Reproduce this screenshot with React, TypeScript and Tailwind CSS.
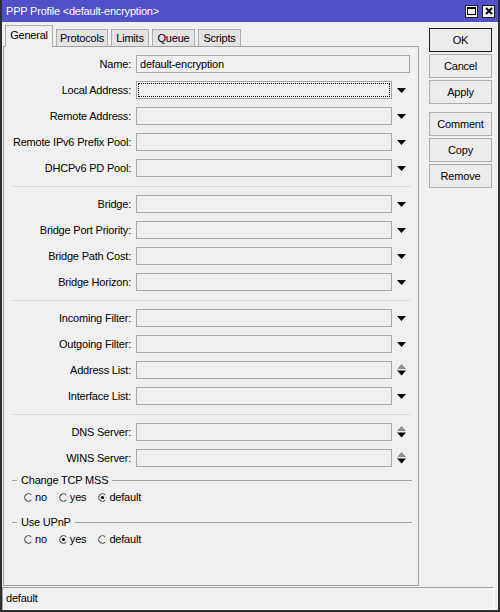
import React from "react";

type FieldKind = "drop" | "spin" | "none";

type Row = {
  label: string;
  value?: string;
  kind: FieldKind;
  focused?: boolean;
  wide?: boolean;
};

const groups: Row[][] = [
  [
    { label: "Name:", value: "default-encryption", kind: "none", wide: true },
    { label: "Local Address:", kind: "drop", focused: true },
    { label: "Remote Address:", kind: "drop" },
    { label: "Remote IPv6 Prefix Pool:", kind: "drop" },
    { label: "DHCPv6 PD Pool:", kind: "drop" },
  ],
  [
    { label: "Bridge:", kind: "drop" },
    { label: "Bridge Port Priority:", kind: "drop" },
    { label: "Bridge Path Cost:", kind: "drop" },
    { label: "Bridge Horizon:", kind: "drop" },
  ],
  [
    { label: "Incoming Filter:", kind: "drop" },
    { label: "Outgoing Filter:", kind: "drop" },
    { label: "Address List:", kind: "spin" },
    { label: "Interface List:", kind: "drop" },
  ],
  [
    { label: "DNS Server:", kind: "spin" },
    { label: "WINS Server:", kind: "spin" },
  ],
];

const tabs = [
  { name: "General", w: "w-[48px]" },
  { name: "Protocols", w: "w-[52px]" },
  { name: "Limits", w: "w-[38px]" },
  { name: "Queue", w: "w-[43px]" },
  { name: "Scripts", w: "w-[43px]" },
];

const buttons = ["OK", "Cancel", "Apply", "Comment", "Copy", "Remove"];

function DropArrow() {
  return (
    <svg width="9" height="5" viewBox="0 0 9 5">
      <polygon points="0,0 9,0 4.5,5" fill="#000" />
    </svg>
  );
}

function SpinArrows() {
  return (
    <svg width="9" height="12" viewBox="0 0 9 12">
      <polygon points="4.5,0 9,5 0,5" fill="#8e8e8e" />
      <polygon points="0,6.5 9,6.5 4.5,11.5" fill="#000" />
    </svg>
  );
}

function Radio({ checked }: { checked?: boolean }) {
  return (
    <svg width="9" height="9" viewBox="0 0 9 9" className="shrink-0">
      <path d="M7.2 1.8 A3.8 3.8 0 1 0 7.2 7.2" fill="none" stroke="#4a4a4a" strokeWidth="1.1" />
      <path d="M7.2 1.8 A3.8 3.8 0 0 1 7.2 7.2" fill="none" stroke="#d6d6d6" strokeWidth="1" />
      {checked && <circle cx="4.5" cy="4.5" r="1.6" fill="#000" />}
    </svg>
  );
}

function FieldRow({ row }: { row: Row }) {
  return (
    <div className="flex items-center h-[26px]">
      <div className="w-[127px] text-right whitespace-nowrap">{row.label}</div>
      <div
        className={`relative ml-[5px] h-[18px] border border-[#a8a8a8] bg-[#f0f0f0] flex items-center pl-[3px] ${
          row.wide ? "w-[274px]" : "w-[256px]"
        }`}
      >
        {row.value}
        {row.focused && <div className="absolute inset-[1px] border border-dotted border-black" />}
      </div>
      {row.kind !== "none" && (
        <div className="ml-[5px] w-[9px] flex items-center justify-center">
          {row.kind === "drop" ? <DropArrow /> : <SpinArrows />}
        </div>
      )}
    </div>
  );
}

function GroupHeader({ title }: { title: string }) {
  return (
    <div className="flex items-center h-[18px]">
      <div className="ml-[8px] w-[5px] h-px bg-[#a0a0a0]" />
      <span className="mx-[4px]">{title}</span>
      <div className="flex-1 h-px bg-[#a0a0a0] mr-[6px]" />
    </div>
  );
}

function RadioRow({ options, selected }: { options: string[]; selected: number }) {
  return (
    <div className="flex items-center h-[16px] pl-[20px] gap-[12px]">
      {options.map((o, i) => (
        <div key={o} className="flex items-center gap-[2px]">
          <Radio checked={i === selected} />
          <span>{o}</span>
        </div>
      ))}
    </div>
  );
}

export default function App() {
  return (
    <div
      className="w-[500px] h-[612px] bg-[#f0f0f0] border-l-2 border-r-2 border-b-2 border-[#2e2e2e] flex flex-col text-[11px] tracking-[-0.2px] text-black overflow-hidden"
      style={{ fontFamily: '"Liberation Sans", Arial, sans-serif' }}
    >
      {/* title bar */}
      <div className="h-[22px] shrink-0 bg-[#5050c8] flex items-center pl-[4px] pr-[3px]">
        <span className="text-white">PPP Profile &lt;default-encryption&gt;</span>
        <div className="ml-auto flex gap-[4px]">
          <div className="w-[13px] h-[13px] border border-[#1e1e1e] bg-[#f0f0f0] flex items-center justify-center">
            <div className="w-[9px] h-[8px] border border-black border-t-2" />
          </div>
          <div className="w-[13px] h-[13px] border border-[#1e1e1e] bg-[#f0f0f0] flex items-center justify-center">
            <svg width="8" height="8" viewBox="0 0 8 8">
              <path d="M1 1 L7 7 M7 1 L1 7" stroke="#000" strokeWidth="1.8" />
            </svg>
          </div>
        </div>
      </div>

      <div className="flex flex-1 min-h-0">
        {/* tabs and panel */}
        <div className="w-[417px] pl-[1px] flex flex-col pb-[1px]">
          <div className="h-[24px] shrink-0 flex items-end pl-[2px] gap-[3px]">
            {tabs.map((t, i) =>
              i === 0 ? (
                <div
                  key={t.name}
                  className={`${t.w} h-[22px] -mb-px relative z-10 bg-[#f0f0f0] border border-b-0 border-[#adadad] flex items-center justify-center pb-[2px]`}
                >
                  {t.name}
                </div>
              ) : (
                <div
                  key={t.name}
                  className={`${t.w} h-[17px] bg-[#e3e3e3] border border-b-0 border-[#adadad] flex items-center justify-center`}
                >
                  {t.name}
                </div>
              )
            )}
          </div>
          <div className="flex-1 border border-[#a0a0a0] pt-[4px] flex flex-col">
            {groups.map((g, gi) => (
              <React.Fragment key={gi}>
                {gi > 0 && (
                  <div className="h-[10px] flex items-center">
                    <div className="ml-[8px] mr-[7px] flex-1 h-px bg-[#dadada]" />
                  </div>
                )}
                {g.map((r) => (
                  <FieldRow key={r.label} row={r} />
                ))}
              </React.Fragment>
            ))}
            <GroupHeader title="Change TCP MSS" />
            <RadioRow options={["no", "yes", "default"]} selected={2} />
            <div className="h-[8px]" />
            <GroupHeader title="Use UPnP" />
            <RadioRow options={["no", "yes", "default"]} selected={1} />
          </div>
        </div>

        {/* action buttons */}
        <div className="flex-1 pl-[10px] pt-[6px] flex flex-col">
          {buttons.map((b, i) => (
            <div
              key={b}
              className={`w-[63px] h-[24px] flex items-center justify-center ${
                i === 0 ? "border border-[#1a1a1a] bg-[#ececec]" : "border border-[#adadad] bg-[#ececec]"
              } ${i === 3 ? "mt-[8px]" : i > 0 ? "mt-[2px]" : ""}`}
            >
              {b}
            </div>
          ))}
        </div>
      </div>

      {/* status bar */}
      <div className="h-[23px] shrink-0 w-[492px] border-t border-l border-[#a0a0a0] border-r border-b border-r-white border-b-white flex items-center pl-[3px]">
        default
      </div>
    </div>
  );
}
